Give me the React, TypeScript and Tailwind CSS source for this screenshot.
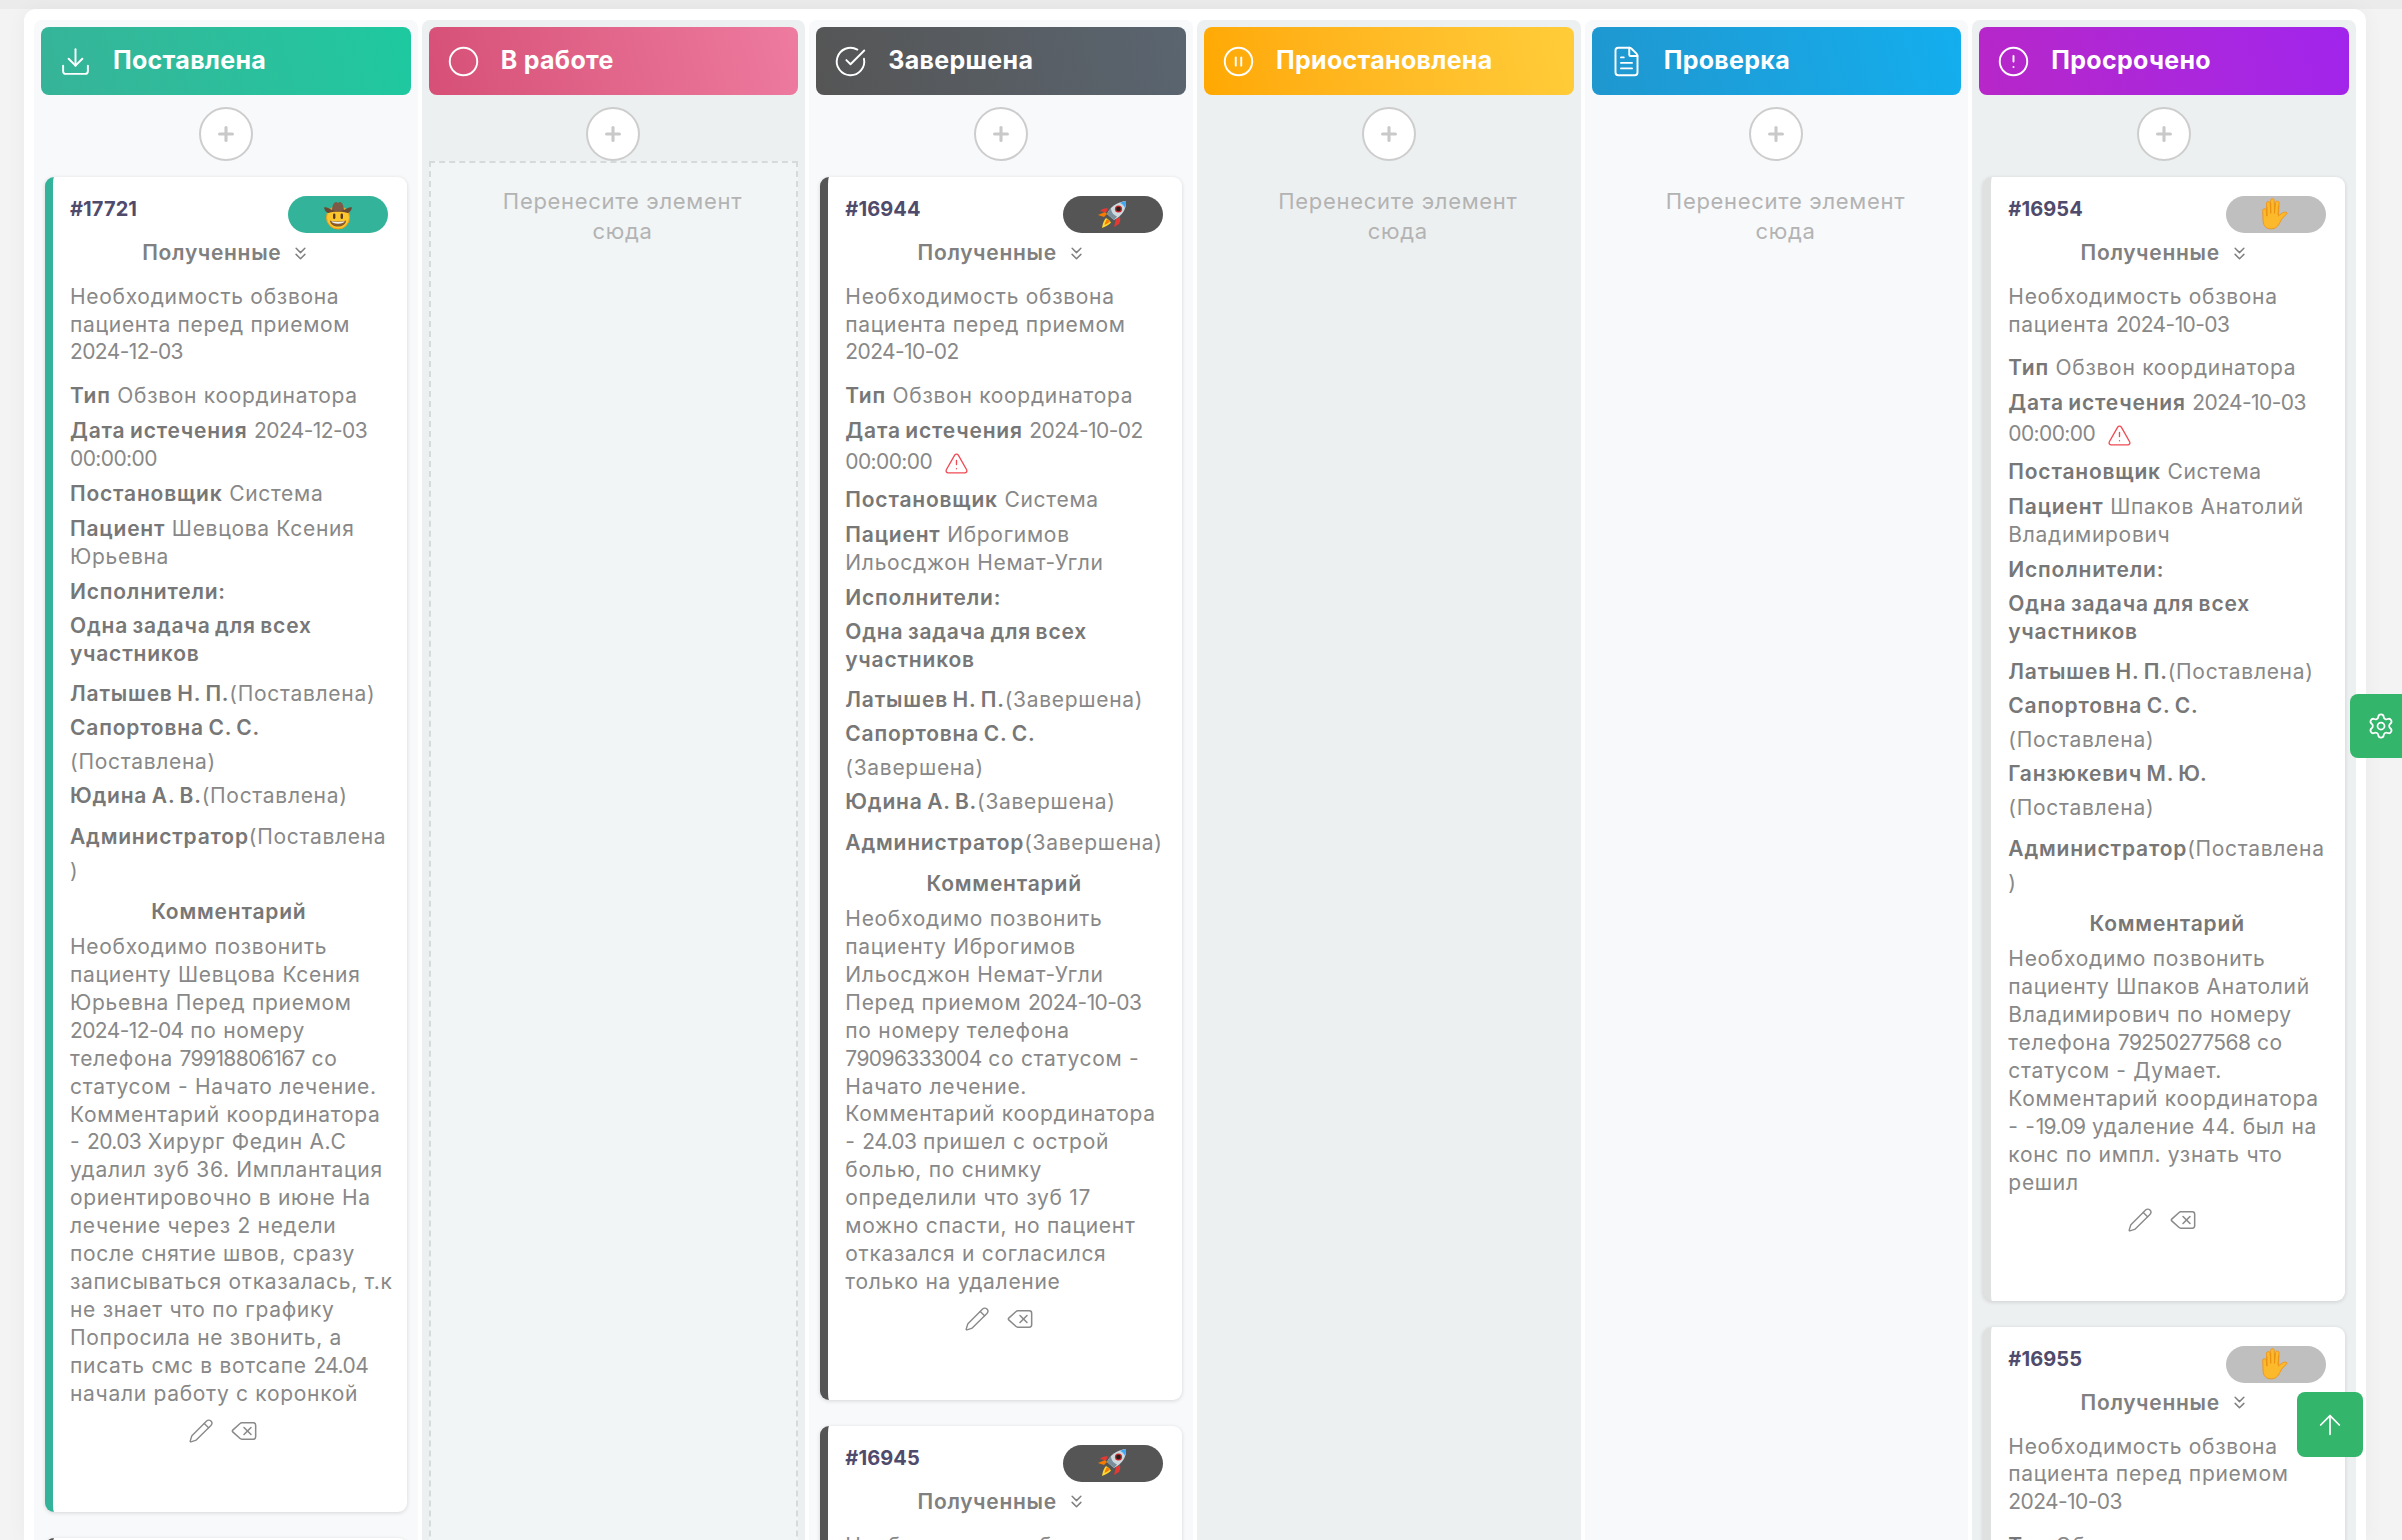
import React from "react";
import { Download, Circle, CircleCheckBig, CirclePause, FileText, CircleAlert, Plus, ChevronsDown, TriangleAlert, Pencil, Delete, ArrowUp, Settings } from "lucide-react";

const Cowboy = () => (
  <svg width="30" height="30" viewBox="0 0 30 30">
    <circle cx="15" cy="17.500" r="11.500" fill="#fcc62d" stroke="#f09a1a" strokeWidth="1" />
    <path d="M1 7.500c2.500-1 4.500 1 7 2 4 1 10 1 14 0 2.500-1 4.500-3 7-2-.5 3-3 5.500-4.500 5.500C21 11.300 9 11.300 5.500 13 4 13 1.500 10.500 1 7.500z" fill="#6b4a35" />
    <path d="M9 10c.2-4 1.800-8 4-8 1 0 1.300.8 2 .8s1-.8 2-.8c2.200 0 3.800 4 4 8-3.800 1.200-8.200 1.200-12 0z" fill="#7d5a45" />
    <rect x="10" y="13.500" width="2.400" height="5.500" rx="1.200" fill="#5a3b22" />
    <rect x="17.600" y="13.500" width="2.400" height="5.500" rx="1.200" fill="#5a3b22" />
    <path d="M6.800 20.500c4.800 1.300 11.600 1.300 16.400 0-.7 4-4 6-8.200 6s-7.500-2-8.200-6z" fill="#8a5a2b" />
    <path d="M8.300 21.300c4.300.8 9.100.8 13.400 0-.5 1.600-3.200 2.500-6.700 2.500s-6.200-.9-6.700-2.500z" fill="#eef1f3" />
  </svg>
);

const Rocket = () => (
  <svg width="32" height="30" viewBox="0 0 32 30">
    <path d="M8 12 1 15l6 2 3-3z" fill="#f57c00" />
    <path d="M9 12.500 3 11c2-2 5-3 8-2.500z" fill="#e53935" />
    <path d="M19 19l-2 8 5-3c1.300-2 1.500-5 1-7z" fill="#e53935" />
    <path d="M9 18c-2 2-3.500 6-4 10 3-1 7-3 9-5.500l-2-2.500z" fill="#fdd835" />
    <path d="M10 19c-1 1.500-2 3.500-2.500 6 2-.8 4-2 5.500-3.500z" fill="#f57c00" />
    <path d="M10 14C13 7 20 2 29 1c.7 8-4 15-12 19z" fill="#cfd8dc" />
    <path d="M23 2.700c2-.8 4-1.300 6-1.700 .2 2.300-.2 4.600-1 6.800C27 5.500 25 3.700 23 2.700z" fill="#42a5f5" />
    <path d="M10 14c1-2 2.300-4 4-6 0 4 2.500 7 6 8.500-1 1.300-2 2.500-3 3.500z" fill="#78909c" />
    <circle cx="21.500" cy="9" r="3.600" fill="#c62828" />
    <circle cx="21.500" cy="9" r="2.300" fill="#212121" />
  </svg>
);

const Hand = () => (
  <svg width="31" height="33" viewBox="3 0 26 31" preserveAspectRatio="none" className="shrink-0">
    <path d="M5.300 11.500c0-1.900 2.700-1.900 2.900 0l.6 5.500L8.500 4.800c0-1.900 2.900-1.900 3 0l.5 9.500-.1-12.100c0-2 3-2 3 0l.3 12.200.9-10.200c.2-1.900 3-1.700 2.900.2l-.5 12.600c1.500-1.700 3.800-3.800 5.700-3.800 1.500 0 1.800 1.400.9 2.200-2.500 2.100-4.200 4.600-5.500 7.700-1.400 3.400-3.600 5.900-7.200 5.900-4.600 0-6.500-3.100-6.800-7.300z" fill="#fdb92c" stroke="#ee9416" strokeWidth=".8" />
    <path d="M8.800 8v9M12 5v9.500M15.200 5v9.500M18.500 7l-.4 9" stroke="#e8930f" strokeWidth=".7" fill="none" />
  </svg>
);

const B = "font-semibold tracking-[0.8px] [word-spacing:-1.5px] text-[#777]";

// Numbers are narrower than the body text in the reference.
const Num = ({ text }: { text: string }) => (
  <>
    {text.split(/(\d[\d\-:.]+\d)/).map((part, i) =>
      i % 2 === 1 ? (
        <span key={i} className="tracking-[-0.6px]">{part}</span>
      ) : (
        <React.Fragment key={i}>{part}</React.Fragment>
      )
    )}
  </>
);

const Row = ({ b, children }: { b?: string; children?: React.ReactNode }) => (
  <p className="mb-[7px] leading-[28px]">
    {b && <><span className={B}>{b}</span>{" "}</>}
    {children}
  </p>
);

const Assignee = ({ name, status, wrap }: { name: string; status: string; wrap?: boolean }) => (
  <p className="leading-[34px]">
    <span className={B}>{name}</span>
    {wrap && <br />}({status})
  </p>
);

type CardData = {
  id: string;
  accent: string;
  pill: string;
  emoji: React.ReactNode;
  desc: string[];
  date: string;
  late?: boolean;
  patient: string[];
  status: string;
  extra?: string;
  adminWrap?: boolean;
  comment: string[];
};

const Lines = ({ items }: { items: string[] }) => (
  <>
    {items.map((l, i) => (
      <React.Fragment key={i}>
        {i > 0 && <br />}
        <Num text={l} />
      </React.Fragment>
    ))}
  </>
);

const Card = ({ c }: { c: CardData }) => (
  <div className={`mx-[4px] mb-[26px] rounded-[9px] border-l-[8px] bg-white pl-[17px] pr-[19px] pt-[19px] pb-[68px] font-['Inter','Noto_Sans',sans-serif] text-[21px] tracking-[0.7px] whitespace-nowrap text-[#888] shadow-[0_1px_4px_rgba(0,0,0,0.14)] ${c.accent}`}>
    <div className="flex items-start justify-between">
      <span className="text-[20px] font-bold leading-[26px] tracking-[0.1px] text-[#4f4b6c]">{c.id}</span>
      <span className={`flex h-[37px] w-[100px] items-center justify-center rounded-full ${c.pill}`}>{c.emoji}</span>
    </div>
    <div className="mt-[6px] mb-[16px] flex h-[28px] items-center justify-center gap-[9px] pr-[4px] text-[21px] font-semibold text-[#808080]">
      Полученные <ChevronsDown size={21} strokeWidth={1.7} />
    </div>
    <p className="mb-[16px] leading-[27.7px]"><Lines items={c.desc} /></p>
    <Row b="Тип">Обзвон координатора</Row>
    <p className="mb-[7px] leading-[28px]">
      <span className={B}>Дата истечения</span> <Num text={c.date} />
      <br />
      {c.late ? (
        <span className="inline-flex h-[34px] items-center gap-[12px] align-top leading-[34px]"><Num text="00:00:00" /> <TriangleAlert size={25} strokeWidth={1.3} className="mt-[3px] text-[#ef4b55]" /></span>
      ) : (
        <Num text="00:00:00" />
      )}
    </p>
    <Row b="Постановщик">Система</Row>
    <Row b="Пациент"><Lines items={c.patient} /></Row>
    <p className={`mb-[6px] leading-[28px] ${B}`}>Исполнители:</p>
    <p className={`mb-[9px] leading-[28px] ${B}`}>Одна задача для всех<br />участников</p>
    <Assignee name="Латышев Н. П." status={c.status} />
    <Assignee name="Сапортовна С. С." status={c.extra ? "Поставлена" : c.status} wrap />
    {c.extra ? <Assignee name={c.extra} status="Поставлена" wrap /> : <Assignee name="Юдина А. В." status={c.status} />}
    <p className="mt-[7px] mb-[7px] leading-[34px]">
      <span className={B}>Администратор</span>({c.adminWrap ? <>{c.status}<br />)</> : <>{c.status})</>}
    </p>
    <p className={`mb-[4px] text-center leading-[34px] ${B}`}>Комментарий</p>
    <p className="leading-[27.9px]"><Lines items={c.comment} /></p>
    <div className="mt-[10px] flex h-[26px] items-center justify-center gap-[16px] pr-[11px] text-[#8a8a8a]">
      <Pencil size={26} strokeWidth={1.3} />
      <Delete size={28} strokeWidth={1.3} />
    </div>
  </div>
);

const green = { accent: "border-[#33b399]", pill: "bg-[#33b399]", emoji: <Cowboy /> };
const dark = { accent: "border-[#555555]", pill: "bg-[#555555]", emoji: <Rocket /> };
const gray = { accent: "border-[#dfe1e1]", pill: "bg-[#bfbfbf]", emoji: <Hand /> };

const c17721: CardData = {
  ...green,
  id: "#17721",
  desc: ["Необходимость обзвона", "пациента перед приемом", "2024-12-03"],
  date: "2024-12-03",
  patient: ["Шевцова Ксения", "Юрьевна"],
  status: "Поставлена",
  adminWrap: true,
  comment: [
    "Необходимо позвонить",
    "пациенту Шевцова Ксения",
    "Юрьевна Перед приемом",
    "2024-12-04 по номеру",
    "телефона 79918806167 со",
    "статусом - Начато лечение.",
    "Комментарий координатора",
    "- 20.03 Хирург Федин А.С",
    "удалил зуб 36. Имплантация",
    "ориентировочно в июне На",
    "лечение через 2 недели",
    "после снятие швов, сразу",
    "записываться отказалась, т.к",
    "не знает что по графику",
    "Попросила не звонить, а",
    "писать смс в вотсапе 24.04",
    "начали работу с коронкой",
  ],
};

const c16944: CardData = {
  ...dark,
  id: "#16944",
  desc: ["Необходимость обзвона", "пациента перед приемом", "2024-10-02"],
  date: "2024-10-02",
  late: true,
  patient: ["Иброгимов", "Ильосджон Немат-Угли"],
  status: "Завершена",
  comment: [
    "Необходимо позвонить",
    "пациенту Иброгимов",
    "Ильосджон Немат-Угли",
    "Перед приемом 2024-10-03",
    "по номеру телефона",
    "79096333004 со статусом -",
    "Начато лечение.",
    "Комментарий координатора",
    "- 24.03 пришел с острой",
    "болью, по снимку",
    "определили что зуб 17",
    "можно спасти, но пациент",
    "отказался и согласился",
    "только на удаление",
  ],
};

const c16945: CardData = { ...c16944, id: "#16945" };

const c16954: CardData = {
  ...gray,
  id: "#16954",
  desc: ["Необходимость обзвона", "пациента 2024-10-03"],
  date: "2024-10-03",
  late: true,
  patient: ["Шпаков Анатолий", "Владимирович"],
  status: "Поставлена",
  extra: "Ганзюкевич М. Ю.",
  adminWrap: true,
  comment: [
    "Необходимо позвонить",
    "пациенту Шпаков Анатолий",
    "Владимирович по номеру",
    "телефона 79250277568 со",
    "статусом - Думает.",
    "Комментарий координатора",
    "- -19.09 удаление 44. был на",
    "конс по импл. узнать что",
    "решил",
  ],
};

const c16955: CardData = { ...c16954, id: "#16955", desc: ["Необходимость обзвона", "пациента перед приемом", "2024-10-03"] };

const Empty = ({ dashed }: { dashed?: boolean }) => (
  <div className={`flex-1 pl-[18px] text-center font-['Inter','Noto_Sans',sans-serif] text-[22px] leading-[30px] tracking-[0.7px] text-[#b3b3b3] ${dashed ? "border-2 border-dashed border-[#d6dadb] bg-[#f1f5f6] pt-[23px]" : "pt-[25px]"}`}>
    Перенесите элемент
    <br />
    сюда
  </div>
);

const columns = [
  { title: "Поставлена", icon: <Download size={33} strokeWidth={1.4} />, grad: "from-[#36b398] to-[#1dc9a0]", bg: "bg-[#f8f9fb]", body: <div className="mt-[16px]"><Card c={c17721} /><Card c={c16945} /></div> },
  { title: "В работе", icon: <Circle size={33} strokeWidth={1.4} />, grad: "from-[#d64f76] to-[#ee7ba0]", bg: "bg-[#edf0f1]", body: <Empty dashed /> },
  { title: "Завершена", icon: <CircleCheckBig size={33} strokeWidth={1.4} />, grad: "from-[#555555] to-[#5a6570]", bg: "bg-[#f8f9fb]", body: <div className="mt-[16px]"><Card c={c16944} /><Card c={c16945} /></div> },
  { title: "Приостановлена", icon: <CirclePause size={33} strokeWidth={1.4} />, grad: "from-[#ffa800] to-[#ffcd39]", bg: "bg-[#edf0f1]", body: <Empty /> },
  { title: "Проверка", icon: <FileText size={33} strokeWidth={1.4} />, grad: "from-[#1f97cf] to-[#13aeee]", bg: "bg-[#f8f9fb]", body: <Empty /> },
  { title: "Просрочено", icon: <CircleAlert size={33} strokeWidth={1.4} />, grad: "from-[#b726c8] to-[#a124ec]", bg: "bg-[#edf0f1]", body: <div className="mt-[16px]"><Card c={c16954} /><Card c={c16955} /></div> },
];

export default function App() {
  return (
    <div className="relative h-[1540px] overflow-hidden bg-[#f3f3f3]">
      <div className="h-[9px] bg-[#ebebeb]" />
      <div className="ml-[24px] mr-[36px] h-[1531px] rounded-t-[12px] bg-white px-[10px] pt-[11px] shadow-[0_0_20px_rgba(0,0,0,0.04)]">
        <div className="grid h-full grid-cols-6 gap-[4px]">
          {columns.map((col) => (
            <div key={col.title} className={`flex min-w-0 flex-col rounded-t-[8px] pl-[7px] pr-[7px] pt-[7px] ${col.bg}`}>
              <div className={`flex h-[68px] items-center gap-[21px] rounded-[8px] bg-linear-75 pl-[18px] font-['Inter','Noto_Sans',sans-serif] text-[25px] font-bold tracking-[0.3px] text-white ${col.grad}`}>
                {col.icon}
                <span>{col.title}</span>
              </div>
              <div className="relative z-10 mx-auto mt-[12px] flex h-[54px] w-[54px] shrink-0 items-center justify-center rounded-full border-2 border-[#cdcdcd] bg-white text-[#c9c9c9]">
                <Plus size={22} strokeWidth={3.4} />
              </div>
              {col.body}
            </div>
          ))}
        </div>
      </div>
      <div className="absolute right-0 top-[694px] flex h-[64px] w-[52px] items-center rounded-l-[8px] bg-[#33b56b] pl-[17px] text-white">
        <Settings size={28} strokeWidth={1.5} />
      </div>
      <div className="absolute left-[2297px] top-[1392px] flex h-[65px] w-[66px] items-center justify-center rounded-[8px] bg-[#33b56b] text-white">
        <ArrowUp size={32} strokeWidth={1.3} />
      </div>
    </div>
  );
}
